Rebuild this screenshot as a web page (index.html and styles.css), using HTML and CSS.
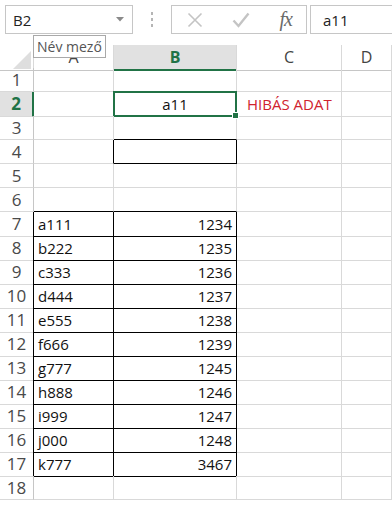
FILE: index.html
```html
<!DOCTYPE html>
<html lang="hu">
<head>
  <meta charset="UTF-8" />
  <meta name="viewport" content="width=device-width,initial-scale=1.0"/>
  <title>Munkafüzet</title>
  <link rel="stylesheet" href="styles.css">
</head>
<body>
  <header class="formula-bar">
    <div class="name-box">
      <span>B2</span>
      <svg class="caret" width="8" height="5" viewBox="0 0 8 5"><path d="M0 0h8L4 4.5z" fill="#8a8a8a"/></svg>
    </div>
    <div class="grip"><i></i><i></i><i></i></div>
    <div class="fx-box">
      <svg class="btn-x" width="16" height="16" viewBox="0 0 16 16"><path d="M1.5 1.5l13 13M14.5 1.5l-13 13" stroke="#c4c4c4" stroke-width="1.6" fill="none"/></svg>
      <svg class="btn-ok" width="18" height="16" viewBox="0 0 18 16"><path d="M1.5 8.5l5 5.5L16.5 1.5" stroke="#c4c4c4" stroke-width="2.4" fill="none"/></svg>
      <span class="fx">fx</span>
    </div>
    <div class="formula-input">a11</div>
  </header>

  <main class="sheet">
    <div class="row head">
      <div class="corner"></div>
      <div class="col">A</div>
      <div class="col on">B</div>
      <div class="col">C</div>
      <div class="col">D</div>
    </div>
    <div class="row"><div class="rh">1</div><div></div><div></div><div></div><div></div></div>
    <div class="row"><div class="rh on">2</div><div></div><div class="sel center">a11</div><div class="err">HIBÁS ADAT</div><div></div></div>
    <div class="row"><div class="rh">3</div><div></div><div class="bb"></div><div></div><div></div></div>
    <div class="row"><div class="rh">4</div><div class="br"></div><div class="bx"></div><div></div><div></div></div>
    <div class="row"><div class="rh">5</div><div></div><div></div><div></div><div></div></div>
    <div class="row"><div class="rh">6</div><div class="bb"></div><div class="bb"></div><div></div><div></div></div>
    <div class="row"><div class="rh br">7</div><div class="bx">a111</div><div class="bx num">1234</div><div></div><div></div></div>
    <div class="row"><div class="rh br">8</div><div class="bx">b222</div><div class="bx num">1235</div><div></div><div></div></div>
    <div class="row"><div class="rh br">9</div><div class="bx">c333</div><div class="bx num">1236</div><div></div><div></div></div>
    <div class="row"><div class="rh br">10</div><div class="bx">d444</div><div class="bx num">1237</div><div></div><div></div></div>
    <div class="row"><div class="rh br">11</div><div class="bx">e555</div><div class="bx num">1238</div><div></div><div></div></div>
    <div class="row"><div class="rh br">12</div><div class="bx">f666</div><div class="bx num">1239</div><div></div><div></div></div>
    <div class="row"><div class="rh br">13</div><div class="bx">g777</div><div class="bx num">1245</div><div></div><div></div></div>
    <div class="row"><div class="rh br">14</div><div class="bx">h888</div><div class="bx num">1246</div><div></div><div></div></div>
    <div class="row"><div class="rh br">15</div><div class="bx">i999</div><div class="bx num">1247</div><div></div><div></div></div>
    <div class="row"><div class="rh br">16</div><div class="bx">j000</div><div class="bx num">1248</div><div></div><div></div></div>
    <div class="row"><div class="rh br">17</div><div class="bx">k777</div><div class="bx num">3467</div><div></div><div></div></div>
    <div class="row"><div class="rh">18</div><div></div><div></div><div></div><div></div></div>
  </main>

  <div class="tooltip">Név mező</div>
</body>
</html>
```

FILE: styles.css
```css
:root {
  --green: #217346;
  --grid: #d9d9d9;
  --head-line: #c6c6c6;
  --sel-bg: #e1e1e1;
  --box: #c6c6c6;
  --font: 'Open Sans', 'Noto Sans', sans-serif;
}
* { box-sizing: border-box; margin: 0; padding: 0; }
body {
  font-family: var(--font);
  background: #fff;
  color: #111;
  overflow: hidden;
  position: relative;
}

/* formula bar */
.formula-bar {
  display: flex;
  align-items: flex-start;
  height: 45px;
  padding: 5px 0 0 5px;
}
.name-box, .fx-box, .formula-input {
  height: 29px;
  border: 1px solid var(--box);
  display: flex;
  align-items: center;
}
.name-box {
  width: 128px;
  padding: 0 8px 0 7px;
  justify-content: space-between;
  font-size: 15px;
  color: #222;
}
.grip {
  width: 38px;
  height: 29px;
  display: flex;
  flex-direction: column;
  align-items: center;
  justify-content: center;
  gap: 3px;
}
.grip i { width: 2px; height: 3px; background: #b5b5b5; }
.fx-box {
  width: 136px;
  padding: 0 14px 0 15px;
  justify-content: space-between;
}
.fx {
  font-family: 'Liberation Serif', serif;
  font-style: italic;
  font-size: 20px;
  color: #6a6a6a;
  letter-spacing: -1px;
}
.formula-input {
  flex: 1;
  margin: 0 -10px 0 3px;
  padding-left: 12px;
  font-size: 15px;
  color: #222;
}

/* sheet grid */
.row {
  display: grid;
  grid-template-columns: 34px 80px 123px 105px 1fr;
  height: 24px;
}
.row > div {
  border-right: 1px solid var(--grid);
  border-bottom: 1px solid var(--grid);
  font-size: 15px;
  line-height: 23px;
  padding: 1px 4px 0 4px;
  white-space: nowrap;
  position: relative;
}
.row.head { height: 23px; }
.row.head > div {
  border-bottom-color: var(--head-line);
  text-align: center;
  font-size: 16px;
  line-height: 24px;
  padding: 0;
  color: #444;
}
.row.head .col.on {
  background: var(--sel-bg);
  border-bottom: 2px solid var(--green);
  color: var(--green);
  font-weight: bold;
}
.corner { overflow: hidden; }
.corner::after {
  content: '';
  position: absolute;
  right: 2px; bottom: 1px;
  border-style: solid;
  border-width: 0 0 18px 18px;
  border-color: transparent transparent #dedede transparent;
}
.row > .rh {
  border-right-color: var(--head-line);
  text-align: center;
  font-size: 17px;
  padding: 0;
  color: #4a4a4a;
}
.row > .rh.on {
  background: var(--sel-bg);
  border-right: 2px solid var(--green);
  color: var(--green);
  font-weight: bold;
}
.center { text-align: center; }
.num { text-align: right; }
.err { color: #d0222e; padding-left: 10px !important; }

/* black borders */
.row > .bb { border-bottom-color: #000; }
.row > .br { border-right-color: #000; }
.row > .bx { border-color: #000; }

/* active cell */
.sel::after {
  content: '';
  position: absolute;
  top: -1px; left: -1px; right: -1px; bottom: -1px;
  border: 2px solid var(--green);
}
.sel::before {
  content: '';
  position: absolute;
  right: -3px; bottom: -3px;
  width: 5px; height: 5px;
  background: var(--green);
  border: 1px solid #fff;
  z-index: 1;
}

/* tooltip */
.tooltip {
  position: absolute;
  left: 33px; top: 35px;
  height: 23px;
  padding: 0 3px;
  background: #fff;
  border: 1px solid #a9a9a9;
  font-size: 14px;
  line-height: 21px;
  white-space: nowrap;
  color: #555;
  z-index: 2;
}
```
